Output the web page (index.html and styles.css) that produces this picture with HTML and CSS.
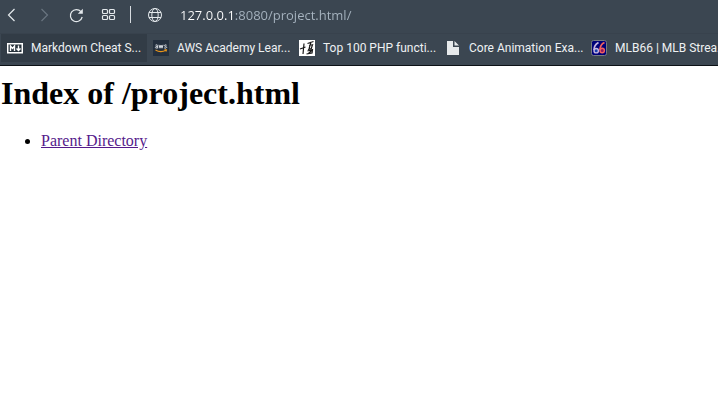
FILE: index.html
```html
<!DOCTYPE html>
<html lang="en">
<head>
<meta charset="utf-8">
<title>Index of /project.html</title>
<link rel="stylesheet" href="styles.css">
</head>
<body>
<header class="browser">
  <div class="toolbar">
    <nav class="controls" aria-label="Browser controls">
      <button class="tool" type="button" aria-label="Back"><svg viewBox="0 0 16 16"><path d="M10.5 2 4.5 8l6 6"/></svg></button>
      <button class="tool" type="button" aria-label="Forward" disabled><svg viewBox="0 0 16 16"><path d="M5.5 2l6 6-6 6"/></svg></button>
      <button class="tool" type="button" aria-label="Reload"><svg viewBox="0 0 16 16"><path d="M13 4.7A6 6 0 1 0 14.2 10"/><path class="solid" d="M14.8 1.8v5h-5z"/></svg></button>
      <button class="tool" type="button" aria-label="Speed dial"><svg viewBox="0 0 16 16"><rect x="2.5" y="2.5" width="5" height="4" rx="1"/><rect x="9.5" y="2.5" width="5" height="4" rx="1"/><rect x="2.5" y="8.5" width="5" height="4" rx="1"/><rect x="9.5" y="8.5" width="5" height="4" rx="1"/></svg></button>
    </nav>
    <span class="divider"></span>
    <button class="tool site" type="button" aria-label="Site information"><svg viewBox="0 0 16 16"><circle cx="8" cy="8" r="6.5"/><ellipse cx="8" cy="8" rx="3.2" ry="6.5"/><path d="M2 5.5h12M2 10.5h12"/></svg></button>
    <input class="address" type="text" aria-label="Address" value="127.0.0.1:8080/project.html/" spellcheck="false">
  </div>
  <nav class="bookmarks" aria-label="Bookmarks">
    <a class="bookmark active" href="#markdown">
      <svg viewBox="0 0 16 16"><rect x=".75" y="3.75" width="14.5" height="9" fill="#27323b" stroke="#fff" stroke-width="1.5"/><path d="M3.5 11V6l2 2.5 2-2.5v5M11.5 5.5v5M9.5 8.5l2 2 2-2" fill="none" stroke="#fff" stroke-width="1.4"/></svg>
      <span>Markdown Cheat S...</span></a>
    <a class="bookmark" href="#aws">
      <svg viewBox="0 0 16 16"><path d="M0 0h16v16H0z" fill="#232f3e"/><path d="M2.5 5.2q2.2-1 2.2.5v2.6M4.7 6.5q-2.5-.1-2.4 1t2.4.3M6 4.8l1 3.4 1-3.2 1 3.2 1-3.4M13.6 5.2q-2.3-.8-2.3.4c0 1 2.4.6 2.4 1.8q-.2 1.2-2.5.5" fill="none" stroke="#d3d8de"/><path d="M2.5 10q5 3.2 10.5.3M11.5 9.7h2l-.5 1.8" fill="none" stroke="#e8941a" stroke-width="1.1"/></svg>
      <span>AWS Academy Lear...</span></a>
    <a class="bookmark" href="#php">
      <svg viewBox="0 0 16 16"><path d="M0 0h16v16H0z" fill="#fff"/><path d="M1 9l5.5-2M5 3.500 4 14M8.500 3.500l6-2M12 2l-2 7M10 5.500l3.500-.8-1.200 3.800L9 9.500M7.500 14l6-1.200M13.500 9.500l-4 4M8.500 11l5-1.500-.5 4" fill="none" stroke="#181818" stroke-width="1.200"/></svg>
      <span>Top 100 PHP functi...</span></a>
    <a class="bookmark" href="#core">
      <svg viewBox="0 0 16 16"><path d="M2 1h6v6h6v8H2zM9.500 1 14 5.500H9.500z" fill="#e6e9eb"/></svg>
      <span>Core Animation Exa...</span></a>
    <a class="bookmark" href="#mlb">
      <svg viewBox="0 0 16 16"><rect x=".5" y=".5" width="15" height="15" rx="2" fill="#000078" stroke="#777b80"/><path d="M7.500 2.500Q3 5 3 10" fill="none" stroke="#c5b4e0" stroke-width="1.800"/><circle cx="5.200" cy="10.700" r="2.200" fill="#183fae" stroke="#c5b4e0" stroke-width="1.400"/><path d="M13.500 2.500Q9 4.500 9 10" fill="none" stroke="#f0605f" stroke-width="1.800"/><circle cx="11.200" cy="10.500" r="2.200" fill="#8b1764" stroke="#f0605f" stroke-width="1.400"/></svg>
      <span>MLB66 | MLB Strea...</span></a>
  </nav>
</header>
<main class="listing">
  <h1>Index of /project.html</h1>
  <ul>
    <li><a href="/">Parent Directory</a></li>
  </ul>
</main>
</body>
</html>
```
FILE: styles.css
```css
* {
  box-sizing: border-box;
}

body {
  margin: 0;
  background: #fff;
  color: #000;
  font: 16px/18px "Liberation Serif", serif;
}

.browser {
  overflow: hidden;
  border-bottom: 1px solid #0c1116;
  background: #3b4651;
  font-family: "Open Sans", sans-serif;
}

.toolbar {
  display: flex;
  align-items: center;
  height: 34px;
  padding: 0 4px 4px;
  border-bottom: 1px solid #38424d;
}

.controls {
  display: flex;
  gap: 16px;
}

.tool {
  display: flex;
  padding: 0;
  border: 0;
  background: none;
  color: #e4e9ec;
}

.tool svg {
  width: 16px;
  height: 16px;
  fill: none;
  stroke: currentColor;
  stroke-width: 1.2;
}

.site svg {
  stroke-width: 1;
}

.tool .solid {
  fill: currentColor;
  stroke: none;
}

.tool:disabled {
  color: #697580;
}

.divider {
  width: 1px;
  height: 17px;
  margin: 0 16px 0 14px;
  background: #d7dce0;
}

.address {
  flex: 1;
  min-width: 0;
  margin-left: 17px;
  padding: 0;
  border: 0;
  outline: 0;
  font: 13px/20px "Open Sans", sans-serif;
  /* The host is brighter than the port and path. */
  background: linear-gradient(to right, #fff 55px, #a7b4c0 55px);
  background-clip: text;
  -webkit-background-clip: text;
  color: transparent;
}

.bookmarks {
  display: flex;
  padding: 0 1px 3px;
}

.bookmark {
  display: flex;
  flex: none;
  align-items: center;
  gap: 8px;
  width: 146px;
  height: 28px;
  padding: 0 6px;
  color: #eef1f3;
  font-family: Roboto, sans-serif;
  font-size: 12px;
  text-decoration: none;
  white-space: nowrap;
}

.bookmark.active {
  background: #323c46;
}

.bookmark svg {
  flex: none;
  width: 16px;
  height: 16px;
}

.listing {
  padding: 8px 1px;
}

h1 {
  margin: 0 0 20px;
  font-size: 32px;
  line-height: 38px;
}

ul {
  margin: 0;
  padding-left: 40px;
}

.listing a {
  color: #551a8b;
}
```
